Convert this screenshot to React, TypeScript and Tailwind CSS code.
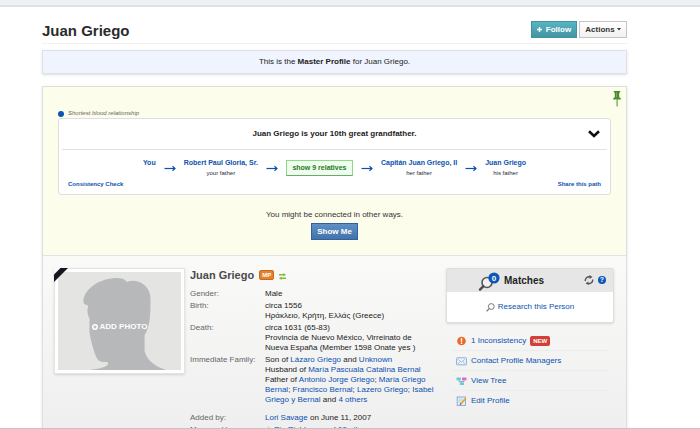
import type { ReactNode } from 'react';

interface LinkProps {
  children: ReactNode;
  className?: string;
}

function Link({ children, className = '' }: LinkProps) {
  return (
    <a href="#" className={`text-[#0b51b0] hover:underline ${className}`}>
      {children}
    </a>
  );
}

function Arrow() {
  return (
    <svg className="w-3 h-2 mt-[6px] shrink-0" viewBox="0 0 12 8" fill="none" stroke="#0b51b0">
      <path strokeWidth="1.2" d="M0.5 4.5h10.5" />
      <path strokeWidth="1.2" d="M8.5 2.2L11 4.5L8.5 6.8" />
    </svg>
  );
}

function Relative({ name, relation }: { name: string; relation?: string }) {
  return (
    <div className="text-center leading-[10px]">
      <Link className="block text-[7px] font-bold">{name}</Link>
      {relation && <span className="block text-[6px] text-gray-800">{relation}</span>}
    </div>
  );
}

function PageHeader() {
  return (
    <header className="flex items-center justify-between h-[37px] pt-[11px] border-b border-[#f0f0f0]">
      <h1 className="text-[15px] leading-5 font-bold text-[#2b2b2b]">Juan Griego</h1>
      <div className="flex gap-[2px] mb-[2px] text-[8px] font-bold">
        <button className="flex items-center justify-center gap-1 h-[17px] w-[46px] border border-[#3f929f] bg-linear-to-b from-[#57b4c2] to-[#4396a3] text-white">
          <svg className="w-[5px] h-[5px]" viewBox="0 0 5 5" fill="none" stroke="currentColor">
            <path strokeWidth="1.4" d="M2.5 0v5M0 2.5h5" />
          </svg>
          Follow
        </button>
        <button className="flex items-center justify-center gap-[2px] h-[17px] w-12 border border-[#c4c4c4] bg-linear-to-b from-white to-[#f1f1f1] text-[#333]">
          Actions
          <svg className="w-1 h-[3px]" viewBox="0 0 4 3" fill="currentColor">
            <path d="M0 0h4L2 2.5z" />
          </svg>
        </button>
      </div>
    </header>
  );
}

function Relationship() {
  return (
    <section className="relative bg-[#fdfdec] border-b border-[#e2e2e2] px-[15px] pt-[22px] pb-[15px]">
      <svg className="absolute top-1 right-[5px] w-2 h-4" viewBox="0 0 8 16">
        <path fill="#4b8b2b" d="M0.8 0h6.4v1.4H6.2v4.8l1.6 1v1.3H0.2V7.2l1.6-1V1.4h-1z" />
        <path fill="#4b8b2b" d="M3.6 8.4h1v7.2h-1z" />
        <path fill="#79ad57" d="M3 1.5h1v5h-1z" />
      </svg>

      <div className="flex items-center gap-1 h-[9px]">
        <span className="w-[6px] h-[6px] rounded-full bg-[#0b56b6]" />
        <span className="text-[6px] italic text-[#666]">Shortest blood relationship</span>
      </div>

      <div className="rounded-[3px] border border-[#dedede] bg-white px-[3px]">
        <div className="relative flex items-center justify-center h-[31px] border-b border-[#e2e2e2]">
          <h2 className="text-[8px] font-bold text-[#222]">Juan Griego is your 10th great grandfather.</h2>
          <button aria-label="Expand" className="absolute right-[7px] top-[11px]">
            <svg className="block w-3 h-2" viewBox="0 0 12 8" fill="none" stroke="#111">
              <path strokeWidth="2.6" d="M1 1.3l5 4.6l5-4.6" />
            </svg>
          </button>
        </div>
        <div className="flex justify-center items-start gap-2 pt-2 h-[30px]">
          <Relative name="You" />
          <Arrow />
          <Relative name="Robert Paul Gloria, Sr." relation="your father" />
          <Arrow />
          <button className="h-4 mt-[2px] w-[67px] border border-[#8fd98a] border-b-[#6aa96a] bg-[#effdef] text-[7px] leading-[14px] font-bold text-[#257a1c]">
            show 9 relatives
          </button>
          <Arrow />
          <Relative name="Capitán Juan Griego, II" relation="her father" />
          <Arrow />
          <Relative name="Juan Griego" relation="his father" />
        </div>
        <div className="flex justify-between px-[6px] h-[14px] text-[6px] leading-2 font-bold">
          <Link>Consistency Check</Link>
          <Link>Share this path</Link>
        </div>
      </div>

      <div className="flex flex-col items-center gap-[3px] pt-[15px]">
        <p className="text-[8px] leading-[10px] text-[#333]">You might be connected in other ways.</p>
        <button className="h-[17px] w-[47px] border border-[#33629a] bg-linear-to-b from-[#5f90c4] to-[#4273ab] text-[8px] leading-[14px] font-bold text-white">
          Show Me
        </button>
      </div>
    </section>
  );
}

function Portrait() {
  return (
    <button className="relative shrink-0 w-[131px] h-[106px] p-[3px] bg-white border border-[#e4e4e4] shadow-sm">
      <svg className="block w-full h-full" viewBox="0 0 125 99" preserveAspectRatio="none">
        <rect width="125" height="99" fill="#e4e4e3" />
        <path
          fill="#b7b8ba"
          d="M32 99C41 98 50 96 51 93C51 91 50 91 48 91C45 91 42 91 40 88C36 80 33 68 32 60V47C30 43 29 38 31 34C27 33 25 32 26 27C29 15 44 6 60 6C64 6 68 7 70 10C81 6 94 14 94 27C94 42 94 54 88 64V80C91 91 101 96 110 99z"
        />
      </svg>
      <span className="absolute inset-0 flex items-center justify-center gap-[2px] pt-3 text-[8px] font-bold text-white">
        <svg className="w-[6px] h-[6px]" viewBox="0 0 6 6">
          <circle cx="3" cy="3" r="3" fill="white" />
          <path stroke="#a9aaac" strokeWidth="1" d="M3 1.4v3.2M1.4 3h3.2" />
        </svg>
        ADD PHOTO
      </span>
      <svg className="absolute -top-px -left-px w-[14px] h-[14px]" viewBox="0 0 14 14">
        <path fill="#fafafa" d="M0 0h7L0 7z" />
        <path fill="#14171f" d="M6.5 0h7.5L0 14V6.5z" />
      </svg>
    </button>
  );
}

function Row({ label, children }: { label: string; children: ReactNode }) {
  return (
    <div className="flex">
      <dt className="w-[75px] shrink-0 text-[#666]">{label}</dt>
      <dd className="whitespace-nowrap text-[#222]">{children}</dd>
    </div>
  );
}

function Details() {
  return (
    <div className="flex-1 min-w-0">
      <div className="flex items-center gap-[5px] h-[14px]">
        <h2 className="text-[11px] font-bold text-[#4a4a4a]">Juan Griego</h2>
        <span className="h-[10px] w-[15px] rounded-[2px] border border-[#c9691a] bg-[#e6822c] text-center text-[6px] leading-2 font-bold text-white">
          MP
        </span>
        <svg className="w-[7px] h-[7px] mt-[3px]" viewBox="0 0 6 6" fill="#82bd3a">
          <path d="M0 0.9h3.8V0l2.2 1.5L3.8 3V2.1H0z" />
          <path d="M6 5.1H2.2V6L0 4.5L2.2 3v0.9H6z" />
        </svg>
      </div>
      <dl className="flex flex-col gap-[2px] mt-[7px] text-[8px] leading-[10px]">
        <Row label="Gender:">Male</Row>
        <Row label="Birth:">
          circa 1556
          <br />
          Ηράκλειο, Κρήτη, Ελλάς (Greece)
        </Row>
        <Row label="Death:">
          circa 1631 (65-83)
          <br />
          Provincia de Nuevo México, Virreinato de
          <br />
          Nueva España (Member 1598 Onate yes )
        </Row>
        <Row label="Immediate Family:">
          Son of <Link>Lázaro Griego</Link> and <Link>Unknown</Link>
          <br />
          Husband of <Link>María Pascuala Catalina Bernal</Link>
          <br />
          Father of <Link>Antonio Jorge Griego</Link>; <Link>María Griego</Link>
          <br />
          <Link>Bernal</Link>; <Link>Francisco Bernal</Link>; <Link>Lazero Griego</Link>; <Link>Isabel</Link>
          <br />
          <Link>Griego y Bernal</Link> and <Link>4 others</Link>
        </Row>
        <div className="h-1" />
        <Row label="Added by:">
          <Link>Lori Savage</Link> on June 11, 2007
        </Row>
        <Row label="Managed by:">
          <span className="text-[#a8c24a]">★</span> <Link>Pip Richburg</Link> and <Link>68 others</Link>
        </Row>
      </dl>
    </div>
  );
}

function Action({ icon, children }: { icon: ReactNode; children: ReactNode }) {
  return (
    <li className="flex items-center gap-1 h-5 px-1 border-b border-[#ececec] last:border-b-0">
      <svg className="w-[11px] h-[10px] shrink-0" viewBox="0 0 11 10">
        {icon}
      </svg>
      {children}
    </li>
  );
}

function Sidebar() {
  return (
    <aside className="shrink-0 w-[168px] text-[8px]">
      <div className="rounded-[2px] border border-[#dedede] bg-white shadow">
        <div className="relative flex items-center justify-center h-[23px] pr-[38px] bg-[#e6e6e6]">
          <svg className="w-[22px] h-5 mr-1" viewBox="0 0 22 20">
            <circle cx="9" cy="11.5" r="5" fill="#f2f2f2" stroke="#555" strokeWidth="1.6" />
            <path stroke="#4a4a4a" strokeWidth="2.4" strokeLinecap="round" d="M5.2 15.4L2 18.6" />
            <circle cx="16" cy="7" r="5.6" fill="#0b56b6" />
            <text x="16" y="10" textAnchor="middle" fill="white" fontSize="8" fontWeight="bold">0</text>
          </svg>
          <h3 className="text-[10px] font-bold text-[#222]">Matches</h3>
          <div className="absolute right-[7px] top-[6px] flex items-center gap-1">
            <svg className="w-[10px] h-[10px]" viewBox="0 0 10 10" fill="none" stroke="#555" strokeWidth="1.4">
              <path d="M1.2 6A4 4 0 0 1 6 1.8M8.8 4.5A4 4 0 0 1 4 8.6" />
              <path fill="#555" stroke="none" d="M5.5 0L8.5 2L5.5 4zM4.5 6.4L1.5 8.2L4.5 10z" />
            </svg>
            <button aria-label="Help" className="w-2 h-2 rounded-full bg-[#0b56b6] text-[7px] leading-2 font-bold text-white">
              ?
            </button>
          </div>
        </div>
        <div className="flex items-center justify-center gap-[3px] h-[30px]">
          <svg className="w-[9px] h-[9px]" viewBox="0 0 9 9" fill="none" stroke="#777">
            <circle cx="5.3" cy="3.5" r="2.9" />
            <path strokeWidth="1.3" d="M3.2 5.6L0.6 8.4" />
          </svg>
          <Link>Research this Person</Link>
        </div>
      </div>

      <ul className="mt-2 mx-[6px]">
        <Action
          icon={
            <>
              <circle cx="5.5" cy="5" r="4.3" fill="#e8692a" />
              <path fill="white" d="M4.8 2h1.4v3.8H4.8zM4.8 6.6h1.4v1.3H4.8z" />
            </>
          }
        >
          <Link>1 Inconsistency</Link>
          <span className="h-[10px] px-[3px] rounded-[2px] bg-[#d23f36] text-[6px] leading-[10px] font-bold text-white">NEW</span>
        </Action>
        <Action
          icon={
            <>
              <rect x="0.6" y="1.8" width="9.8" height="7" rx="0.5" fill="#eef4fb" stroke="#8eaed4" />
              <path fill="none" stroke="#8eaed4" strokeWidth="0.8" d="M2.2 3.3l3.3 2.9l3.3-2.9M2.2 7.5l2-1.9M8.8 7.5l-2-1.9" />
            </>
          }
        >
          <Link>Contact Profile Managers</Link>
        </Action>
        <Action
          icon={
            <>
              <path fill="none" stroke="#8a96a8" strokeWidth="0.8" d="M3 4v1.6h5V4M5.5 5.5v1.5" />
              <rect x="0.5" y="1.5" width="4.4" height="2.8" fill="#62cfe0" />
              <rect x="6" y="1.5" width="4.5" height="2.8" fill="#e06bc9" />
              <rect x="3.8" y="6.4" width="4.2" height="2.6" fill="#62cfe0" />
            </>
          }
        >
          <Link>View Tree</Link>
        </Action>
        <Action
          icon={
            <>
              <rect x="1.2" y="1" width="8.2" height="8.4" fill="#eaf3fb" stroke="#7ba6cf" strokeWidth="0.9" />
              <path stroke="#8fb5d6" strokeWidth="0.6" d="M2.5 3h4M2.5 4.7h3M2.5 6.4h2" />
              <path stroke="#e0a92c" strokeWidth="1.9" d="M9.8 2.4L4.8 7.8" />
              <path fill="#555" d="M3.6 9l0.5-1.9l1.4 1.2z" />
            </>
          }
        >
          <Link>Edit Profile</Link>
        </Action>
      </ul>
    </aside>
  );
}

export default function App() {
  return (
    <div
      className="h-screen overflow-hidden bg-white border-b border-[#c4c4c4]"
      style={{ fontFamily: '"Liberation Sans", Arial, sans-serif' }}
    >
      <div className="h-[7px] bg-[#eff0f3] border-b-2 border-[#dde1ea]" />
      <main className="ml-[42px] mr-[73px]">
        <PageHeader />
        <p className="mt-[6px] h-6 border border-[#dfe1e5] bg-[#eff4ff] text-center text-[8px] leading-[22px] text-[#222] shadow">
          This is the <strong>Master Profile</strong> for Juan Griego.
        </p>
        <div className="mt-3 border border-b-0 border-[#dedede] shadow-sm">
          <Relationship />
          <section className="flex items-start bg-linear-to-b from-[#fafaf9] to-[#ededed] pt-3 pl-[11px] pr-[12px] pb-6">
            <Portrait />
            <div className="w-[5px] shrink-0" />
            <Details />
            <Sidebar />
          </section>
        </div>
      </main>
    </div>
  );
}
